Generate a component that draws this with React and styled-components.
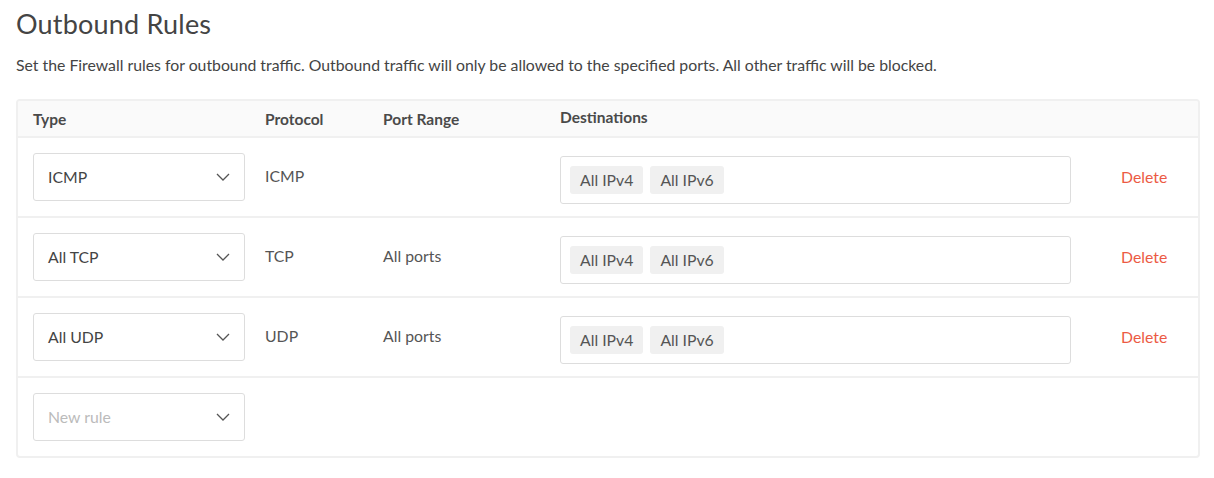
import React from "react";
import styled, { createGlobalStyle } from "styled-components";

const GlobalStyle = createGlobalStyle`
  body {
    margin: 0;
    background: #fff;
    font-family: Lato, "Open Sans", sans-serif;
    color: #444;
  }
`;

const rules = [
  { type: "ICMP", protocol: "ICMP", ports: "" },
  { type: "All TCP", protocol: "TCP", ports: "All ports" },
  { type: "All UDP", protocol: "UDP", ports: "All ports" },
];

const Chevron = () => (
  <svg width="14" height="8" viewBox="0 0 14 8" fill="none">
    <path d="M1 1l6 6 6-6" stroke="#555" strokeWidth="1.3" />
  </svg>
);

const App = () => {
  return (
    <Page>
      <GlobalStyle />
      <Title>Outbound Rules</Title>
      <Description>
        Set the Firewall rules for outbound traffic. Outbound traffic will only
        be allowed to the specified ports. All other traffic will be blocked.
      </Description>
      <Table>
        <HeaderRow>
          <HeadCell>Type</HeadCell>
          <HeadCell>Protocol</HeadCell>
          <HeadCell>Port Range</HeadCell>
          <HeadCell raise>Destinations</HeadCell>
          <HeadCell />
        </HeaderRow>
        {rules.map((r) => (
          <Row key={r.type}>
            <Select>
              <span>{r.type}</span>
              <Chevron />
            </Select>
            <Cell>{r.protocol}</Cell>
            <Cell>{r.ports}</Cell>
            <Destinations>
              <Tag>All IPv4</Tag>
              <Tag>All IPv6</Tag>
            </Destinations>
            <DeleteLink>Delete</DeleteLink>
          </Row>
        ))}
        <Row last>
          <Select placeholder>
            <span>New rule</span>
            <Chevron />
          </Select>
        </Row>
      </Table>
    </Page>
  );
};

const Page = styled.div`
  padding: 4px 14px 20px 16px;
`;

const Title = styled.h1`
  margin: 0;
  font-size: 27px;
  font-weight: 400;
  line-height: 40px;
  color: #444;
  letter-spacing: 0.2px;
`;

const Description = styled.p`
  margin: 11px 0 24px;
  font-size: 15.8px;
  line-height: 20px;
  color: #444;
`;

const columns = "232px 118px 177px 511px 1fr";

const Table = styled.div`
  border: 2px solid #f0f0f0;
  border-radius: 4px;
  overflow: hidden;
`;

const HeaderRow = styled.div`
  display: grid;
  grid-template-columns: ${columns};
  align-items: center;
  height: 35px;
  padding-left: 15px;
  background: #fafafa;
  border-bottom: 2px solid #f0f0f0;
`;

const HeadCell = styled.div`
  font-size: 15.5px;
  font-weight: 700;
  color: #4a4a4a;
  position: relative;
  top: ${(p) => (p.raise ? "-2px" : "0")};
`;

const Row = styled.div`
  display: grid;
  grid-template-columns: ${columns};
  align-items: center;
  height: 78px;
  padding-left: 15px;
  border-bottom: ${(p) => (p.last ? "none" : "2px solid #f0f0f0")};
`;

const Select = styled.div`
  box-sizing: border-box;
  width: 212px;
  height: 48px;
  display: flex;
  align-items: center;
  justify-content: space-between;
  padding: 0 14px 2px 14px;
  border: 1px solid #ddd;
  border-radius: 3px;
  background: #fff;
  font-size: 15.8px;
  color: ${(p) => (p.placeholder ? "#bbb" : "#444")};

  svg {
    margin-top: 2px;
  }
`;

const Cell = styled.div`
  font-size: 15.8px;
  color: #555;
  padding-bottom: 3px;
`;

const Destinations = styled.div`
  box-sizing: border-box;
  width: 511px;
  height: 48px;
  margin-top: 6px;
  display: flex;
  align-items: center;
  gap: 7px;
  padding: 0 9px;
  border: 1px solid #ddd;
  border-radius: 3px;
`;

const Tag = styled.span`
  display: inline-flex;
  align-items: center;
  height: 28px;
  padding: 0 10px 2px;
  box-sizing: border-box;
  background: #f0f0f0;
  border-radius: 3px;
  font-size: 15.8px;
  color: #555;
`;

const DeleteLink = styled.a`
  padding-left: 50px;
  padding-bottom: 2px;
  font-size: 15.8px;
  color: #ec5a44;
  cursor: pointer;
`;

export default App;
